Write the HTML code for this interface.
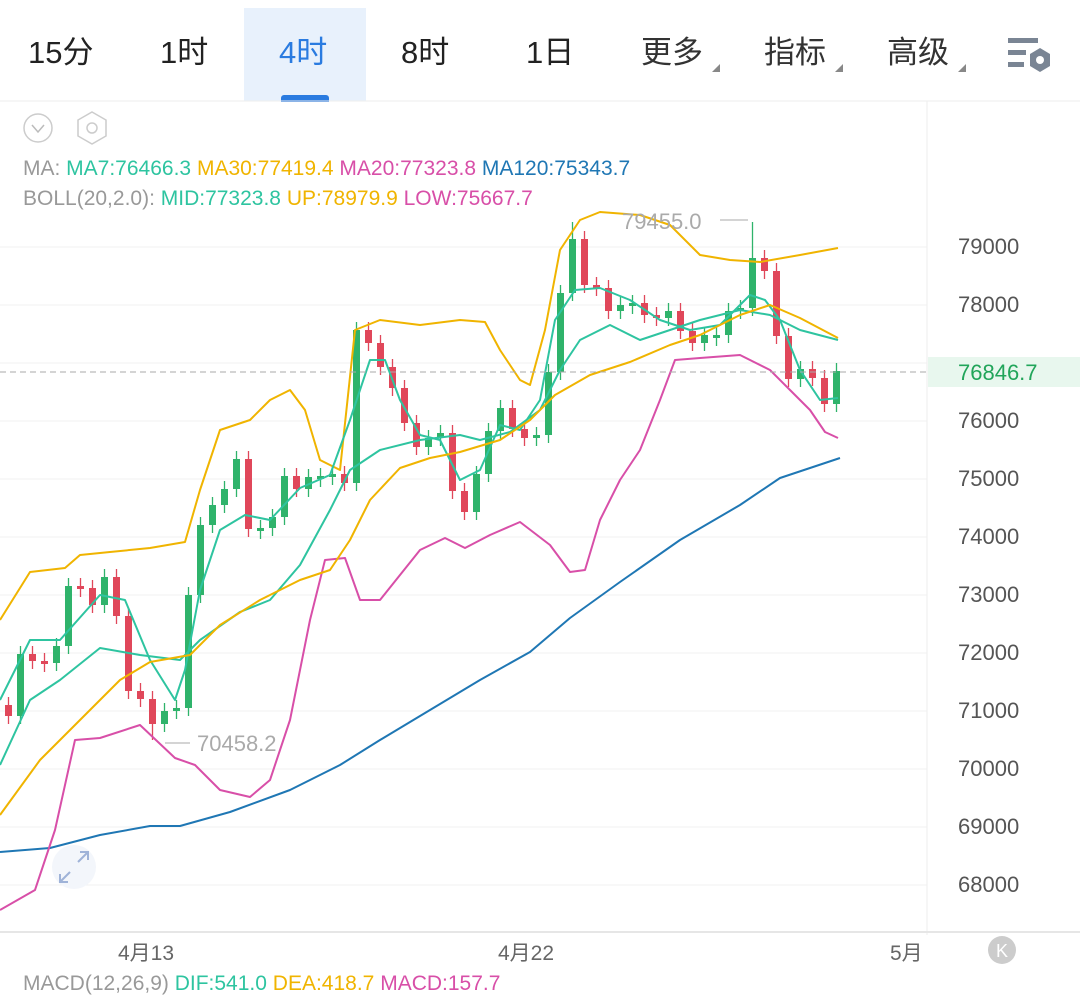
<!DOCTYPE html>
<html><head><meta charset="utf-8"><style>
body{margin:0;width:1080px;height:983px;overflow:hidden;background:#fff;font-family:"Liberation Sans","Noto Sans CJK SC",sans-serif;position:relative}
.t{position:absolute;top:33px;font-size:31px;color:#222;line-height:40px}
.leg{position:absolute;left:23px;font-size:21px;color:#999;white-space:nowrap}
.ax{position:absolute;left:958px;font-size:22px;color:#555}
</style></head><body>
<div style="position:absolute;left:244px;top:8px;width:122px;height:93px;background:#e8f1fc"></div>
<div style="position:absolute;left:281px;top:95px;width:48px;height:7px;background:#2a7be0;border-radius:3px 3px 0 0"></div>
<div class="t" style="left:28px">15分</div>
<div class="t" style="left:160px">1时</div>
<div class="t" style="left:279px;color:#2a7be0">4时</div>
<div class="t" style="left:401px">8时</div>
<div class="t" style="left:526px">1日</div>
<div class="t" style="left:641px;color:#333">更多</div>
<div class="t" style="left:764px;color:#333">指标</div>
<div class="t" style="left:887px;color:#333">高级</div>
<svg style="position:absolute;left:0;top:0" width="1080" height="983">
<polygon points="712,72 720,64 720,72" fill="#888"/><polygon points="835,72 843,64 843,72" fill="#888"/><polygon points="958,72 966,64 966,72" fill="#888"/>
<rect x="1008" y="38" width="30" height="5" fill="#7a8594"/><rect x="1008" y="50" width="18" height="5" fill="#7a8594"/><rect x="1008" y="62" width="16" height="5" fill="#7a8594"/>
<polygon points="1040,48 1050,54 1050,66 1040,72 1030,66 1030,54" fill="#7a8594"/><circle cx="1040" cy="60" r="4" fill="#fff"/>
<line x1="0" y1="101" x2="1080" y2="101" stroke="#eee"/>
<line x1="927" y1="101" x2="927" y2="935" stroke="#eee"/>
<circle cx="38" cy="128" r="14" fill="none" stroke="#ccc" stroke-width="1.5"/><polyline points="32,125 38,132 44,125" fill="none" stroke="#bbb" stroke-width="1.5"/>
<polygon points="92,112 106,120 106,136 92,144 78,136 78,120" fill="none" stroke="#ccc" stroke-width="1.5"/><circle cx="92" cy="128" r="5" fill="none" stroke="#ccc" stroke-width="1.5"/>
<g stroke="#f0f0f0"><line x1="0" y1="247" x2="927" y2="247"/><line x1="0" y1="305" x2="927" y2="305"/><line x1="0" y1="363" x2="927" y2="363"/><line x1="0" y1="421" x2="927" y2="421"/><line x1="0" y1="479" x2="927" y2="479"/><line x1="0" y1="537" x2="927" y2="537"/><line x1="0" y1="595" x2="927" y2="595"/><line x1="0" y1="653" x2="927" y2="653"/><line x1="0" y1="711" x2="927" y2="711"/><line x1="0" y1="769" x2="927" y2="769"/><line x1="0" y1="827" x2="927" y2="827"/><line x1="0" y1="885" x2="927" y2="885"/></g>
<line x1="0" y1="932" x2="1080" y2="932" stroke="#e6e6e6" stroke-width="2"/>
<path stroke="#e0475a" stroke-width="1.3" d="M8.5 697V724 M32.5 646V669 M44.5 653V672 M80.5 578V597 M92.5 580V613 M116.5 569V624 M128.5 608V699 M140.5 683V707 M152.5 691V740 M248.5 451V537 M296.5 468V497 M344.5 466V491 M368.5 322V351 M380.5 335V375 M392.5 359V396 M404.5 380V431 M416.5 415V455 M452.5 425V499 M464.5 483V520 M512.5 400V437 M524.5 421V446 M584.5 231V293 M596.5 277V296 M608.5 280V319 M644.5 295V323 M656.5 307V326 M680.5 303V339 M692.5 323V351 M764.5 250V279 M776.5 263V344 M788.5 328V387 M812.5 361V386 M824.5 370V412"/>
<path fill="#e0475a" d="M5 705h7v11h-7z M29 654h7v7h-7z M41 661h7v3h-7z M77 586h7v3h-7z M89 588h7v17h-7z M113 577h7v39h-7z M125 616h7v75h-7z M137 691h7v8h-7z M149 699h7v25h-7z M245 459h7v70h-7z M293 476h7v13h-7z M341 474h7v9h-7z M365 330h7v13h-7z M377 343h7v24h-7z M389 367h7v21h-7z M401 388h7v35h-7z M413 423h7v24h-7z M449 433h7v58h-7z M461 491h7v21h-7z M509 408h7v21h-7z M521 429h7v9h-7z M581 239h7v46h-7z M593 285h7v3h-7z M605 288h7v23h-7z M641 303h7v12h-7z M653 315h7v3h-7z M677 311h7v20h-7z M689 331h7v12h-7z M761 258h7v13h-7z M773 271h7v65h-7z M785 336h7v43h-7z M809 369h7v9h-7z M821 378h7v26h-7z"/>
<path stroke="#2fb36b" stroke-width="1.3" d="M20.5 646V724 M56.5 638V671 M68.5 578V654 M104.5 569V613 M164.5 703V732 M176.5 700V719 M188.5 587V716 M200.5 517V603 M212.5 497V533 M224.5 481V513 M236.5 451V497 M260.5 520V539 M272.5 509V536 M284.5 468V525 M308.5 469V497 M320.5 468V487 M332.5 466V485 M356.5 322V491 M428.5 430V455 M440.5 425V446 M476.5 466V520 M488.5 423V482 M500.5 400V439 M536.5 427V446 M548.5 364V443 M560.5 285V380 M572.5 222V301 M620.5 297V319 M632.5 295V314 M668.5 303V326 M704.5 327V351 M716.5 327V346 M728.5 303V343 M740.5 300V319 M752.5 222V316 M800.5 361V387 M836.5 363V412"/>
<path fill="#2fb36b" d="M17 654h7v62h-7z M53 646h7v17h-7z M65 586h7v60h-7z M101 577h7v28h-7z M161 711h7v13h-7z M173 708h7v3h-7z M185 595h7v113h-7z M197 525h7v70h-7z M209 505h7v20h-7z M221 489h7v16h-7z M233 459h7v30h-7z M257 528h7v3h-7z M269 517h7v11h-7z M281 476h7v41h-7z M305 477h7v12h-7z M317 476h7v3h-7z M329 474h7v3h-7z M353 330h7v153h-7z M425 438h7v9h-7z M437 433h7v5h-7z M473 474h7v38h-7z M485 431h7v43h-7z M497 408h7v23h-7z M533 435h7v3h-7z M545 372h7v63h-7z M557 293h7v79h-7z M569 239h7v54h-7z M617 305h7v6h-7z M629 303h7v3h-7z M665 311h7v7h-7z M701 335h7v8h-7z M713 335h7v3h-7z M725 311h7v24h-7z M737 308h7v3h-7z M749 258h7v50h-7z M797 369h7v10h-7z M833 371h7v33h-7z"/>
<g fill="none" stroke-width="2" stroke-linejoin="round">
<polyline stroke="#1f77b4" points="0,852 50,848 100,835 150,826 180,826 230,812 290,790 340,765 380,740 430,710 480,680 530,652 570,618 620,582 680,540 740,505 780,478 840,458"/>
<polyline stroke="#f0b400" points="0,620 30,572 65,568 80,555 110,552 150,548 185,542 200,490 220,430 250,420 270,400 290,390 305,410 320,460 340,470 355,330 380,320 420,325 460,320 485,322 500,350 520,380 530,385 545,330 560,250 580,220 600,212 640,215 670,225 700,255 730,260 760,262 800,255 838,248"/>
<polyline stroke="#d84fa8" points="0,910 35,890 55,830 75,740 100,738 140,725 175,758 195,765 220,790 250,797 270,780 290,720 310,620 325,560 345,558 360,600 380,600 400,575 420,550 445,538 465,548 490,535 520,522 550,545 570,572 585,570 600,520 620,480 640,450 660,400 675,360 700,358 740,355 770,370 790,390 810,410 825,432 838,438"/>
<polyline stroke="#2ec4a0" points="0,765 30,700 60,680 100,648 140,655 180,660 200,640 240,612 270,600 300,565 330,510 350,470 380,450 420,440 460,435 480,440 510,432 540,410 560,370 580,340 610,325 640,340 670,330 700,320 740,310 770,315 800,330 838,340"/>
<polyline stroke="#2ec4a0" points="0,700 30,640 60,640 100,595 125,600 150,660 175,700 185,670 200,590 220,530 245,515 270,520 300,488 330,475 350,420 370,360 385,360 400,400 420,435 440,440 460,480 480,470 500,425 520,430 540,400 555,320 575,290 600,288 630,300 660,320 690,330 720,325 750,295 765,300 780,320 800,370 820,400 838,398"/>
<polyline stroke="#f0b400" points="0,815 40,760 80,720 120,680 150,662 190,655 220,625 260,600 300,580 330,570 350,540 370,500 400,468 430,458 460,452 500,440 530,420 555,395 590,375 630,362 670,345 700,335 740,315 770,305 800,318 838,338"/>
</g>
<line x1="0" y1="372" x2="928" y2="372" stroke="#aaa" stroke-dasharray="6,4"/>
<rect x="928" y="357" width="152" height="30" fill="#e8f7ee"/>
<line x1="165" y1="743" x2="190" y2="743" stroke="#aaa"/><line x1="720" y1="220" x2="748" y2="220" stroke="#aaa"/>
<circle cx="74" cy="867" r="22" fill="#f3f6fb"/>
<g stroke="#9fb3d8" stroke-width="2" fill="none"><polyline points="60,874 60,882 68,882"/><line x1="60" y1="882" x2="70" y2="872"/><polyline points="80,852 88,852 88,860"/><line x1="88" y1="852" x2="78" y2="862"/></g>
<circle cx="1002" cy="950" r="14" fill="#ccc"/><text x="1002" y="957" fill="#fff" font-size="18" text-anchor="middle" font-family="Liberation Sans">K</text>
</svg>
<div class="leg" style="top:157px">MA: <span style="color:#2ec4a0">MA7:76466.3</span> <span style="color:#f0b400">MA30:77419.4</span> <span style="color:#d84fa8">MA20:77323.8</span> <span style="color:#1f77b4">MA120:75343.7</span></div>
<div class="leg" style="top:187px">BOLL(20,2.0): <span style="color:#2ec4a0">MID:77323.8</span> <span style="color:#f0b400">UP:78979.9</span> <span style="color:#d84fa8">LOW:75667.7</span></div>
<div class="leg" style="top:209px;left:622px;font-size:22px;color:#aaa">79455.0</div>
<div class="leg" style="top:731px;left:197px;font-size:22px;color:#aaa">70458.2</div>
<div class="ax" style="top:234px">79000</div><div class="ax" style="top:292px">78000</div><div class="ax" style="top:408px">76000</div><div class="ax" style="top:466px">75000</div><div class="ax" style="top:524px">74000</div><div class="ax" style="top:582px">73000</div><div class="ax" style="top:640px">72000</div><div class="ax" style="top:698px">71000</div><div class="ax" style="top:756px">70000</div><div class="ax" style="top:814px">69000</div><div class="ax" style="top:872px">68000</div>
<div class="ax" style="top:360px;color:#21a55a">76846.7</div>
<div class="leg" style="top:937px;left:118px;font-size:21px;color:#666">4月13</div>
<div class="leg" style="top:937px;left:498px;font-size:21px;color:#666">4月22</div>
<div class="leg" style="top:937px;left:890px;font-size:21px;color:#666">5月</div>
<div class="leg" style="top:972px;font-size:21px">MACD(12,26,9) <span style="color:#2ec4a0">DIF:541.0</span> <span style="color:#f0b400">DEA:418.7</span> <span style="color:#d84fa8">MACD:157.7</span></div>
</body></html>
